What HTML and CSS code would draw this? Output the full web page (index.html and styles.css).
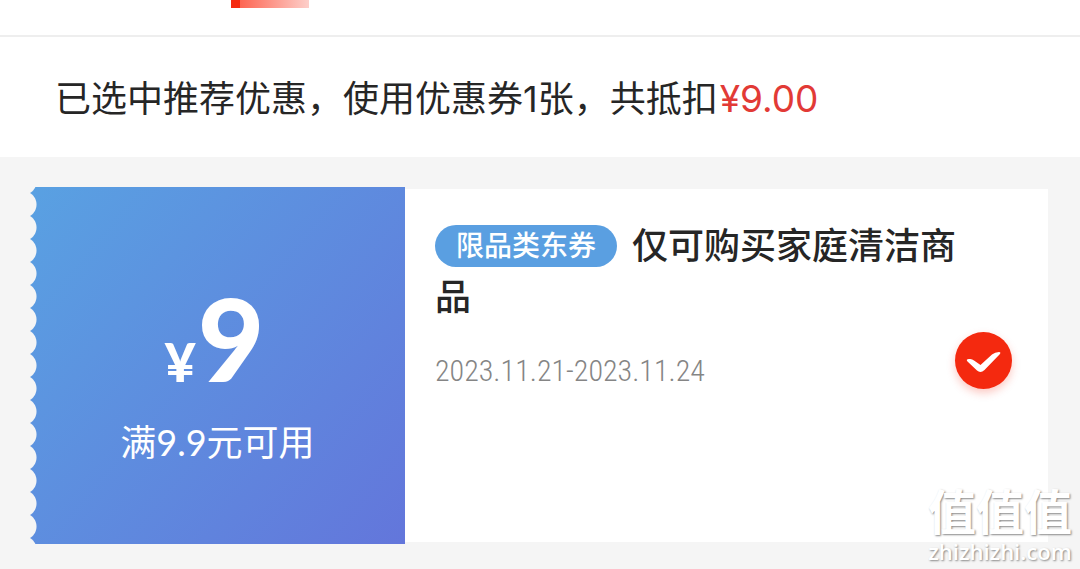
FILE: index.html
```
<!DOCTYPE html>
<html lang="zh-CN">
<head>
<meta charset="utf-8">
<meta name="viewport" content="width=device-width, initial-scale=1">
<title>优惠券</title>
<link rel="stylesheet" href="styles.css">
</head>
<body>
<header class="tabs"><span class="tab-indicator"></span></header>
<p class="summary">已选中推荐优惠，使用优惠券1张，共抵扣<span class="summary-amount">¥9.00</span></p>
<main class="coupons">
  <article class="coupon">
    <div class="coupon-value">
      <p class="price"><span class="currency">¥</span><span class="number">9</span></p>
      <p class="condition">满9.9元可用</p>
    </div>
    <div class="coupon-info">
      <h2 class="title"><span class="badge">限品类东券</span>仅可购买家庭清洁商品</h2>
      <div class="meta">
        <p class="date">2023.11.21-2023.11.24</p>
        <label class="check">
          <input class="check-input" type="checkbox" aria-label="使用此优惠券" checked>
          <svg class="check-mark" viewBox="0 0 57 57" aria-hidden="true"><path d="M12.500 29.500Q10.500 27 14 27Q17 26.500 19 28.500L25.500 33L37 22.500Q40 20 44 20Q46.500 20 44.500 22.500L29.500 38Q25.500 41.500 22 38.500Z"/></svg>
        </label>
      </div>
    </div>
  </article>
</main>
<div class="watermark">
  <span class="watermark-name">值值值</span>
  <span class="watermark-site">zhizhizhi.com</span>
</div>
</body>
</html>
```
FILE: styles.css
```
* {
  box-sizing: border-box;
}

body {
  margin: 0;
  background: #f5f5f5;
  color: #262626;
  font-family: Inter, "Noto Sans CJK SC", sans-serif;
}

p,
h2 {
  margin: 0;
}

.tabs {
  height: 37px;
  padding-left: 231px;
  background: #fff;
  border-bottom: 2px solid #eee;
}

.tab-indicator {
  display: block;
  width: 78px;
  height: 8px;
  background: linear-gradient(90deg, #f52a10 9px, #fd6552 9px, #fdcfca);
}

.summary {
  padding: 36px 55px 32px;
  background: #fff;
  font-size: 36px;
  line-height: 52px;
}

.summary-amount {
  margin-left: 2px;
  color: #e23a36;
  font-size: 37px;
}

.coupons {
  padding: 30px 32px 30px 30px;
}

.coupon {
  display: flex;
  align-items: center;
}

.coupon-value {
  flex: 0 0 375px;
  display: flex;
  flex-direction: column;
  align-items: center;
  min-height: 357px;
  padding-top: 100px;
  color: #fff;
  background:
    radial-gradient(circle at -7px 50%, #f5f5f5 13px, transparent 14px) 0 6px / 7px 23px repeat-y,
    linear-gradient(130deg, #59a1e2, #6376db);
}

.price {
  display: flex;
  align-items: baseline;
  gap: 2px;
  padding-right: 6px;
  font-family: Lato, sans-serif;
  font-weight: 900;
  line-height: 100px;
}

.currency {
  font-size: 54px;
}

.number {
  font-size: 115px;
}

.condition {
  margin-top: 4px;
  font-family: Lato, "Noto Sans CJK SC", sans-serif;
  font-size: 36px;
  line-height: 52px;
}

.coupon-info {
  flex: 1;
  align-self: stretch;
  margin: 2px 0;
  padding: 32px 36px 0 30px;
  background: #fff;
}

.title {
  padding-right: 52px;
  font-size: 36px;
  font-weight: 500;
  line-height: 51px;
}

.badge {
  display: inline-block;
  margin-right: 15px;
  padding: 0 21px;
  border-radius: 21px;
  background: #5a9fe1;
  color: #fff;
  font-size: 28px;
  line-height: 42px;
  vertical-align: 3px;
}

.meta {
  display: flex;
  justify-content: space-between;
  align-items: flex-end;
  margin-top: 9px;
}

.date {
  color: #858585;
  font-family: "Roboto Condensed", Roboto, sans-serif;
  font-size: 30px;
  font-weight: 300;
  line-height: 36px;
}

.check {
  display: grid;
  width: 57px;
  height: 57px;
}

.check-input,
.check-mark {
  grid-area: 1 / 1;
  width: 57px;
  height: 57px;
  margin: 0;
}

.check-input {
  appearance: none;
  border-radius: 50%;
  background: #ccc;
}

.check-input:checked {
  background: #f4290f;
  box-shadow: 0 4px 8px #f4290f40;
}

.check-mark {
  fill: #fff;
  pointer-events: none;
}

.watermark {
  position: absolute;
  right: 8px;
  bottom: 6px;
  display: flex;
  flex-direction: column;
  align-items: center;
  color: #fff;
  text-shadow: 1px 1px 2px #888;
}

.watermark-name {
  font-size: 48px;
  font-weight: 700;
  line-height: 52px;
}

.watermark-site {
  font-family: "Open Sans", sans-serif;
  font-size: 22px;
  font-weight: 600;
  line-height: 24px;
}
```
